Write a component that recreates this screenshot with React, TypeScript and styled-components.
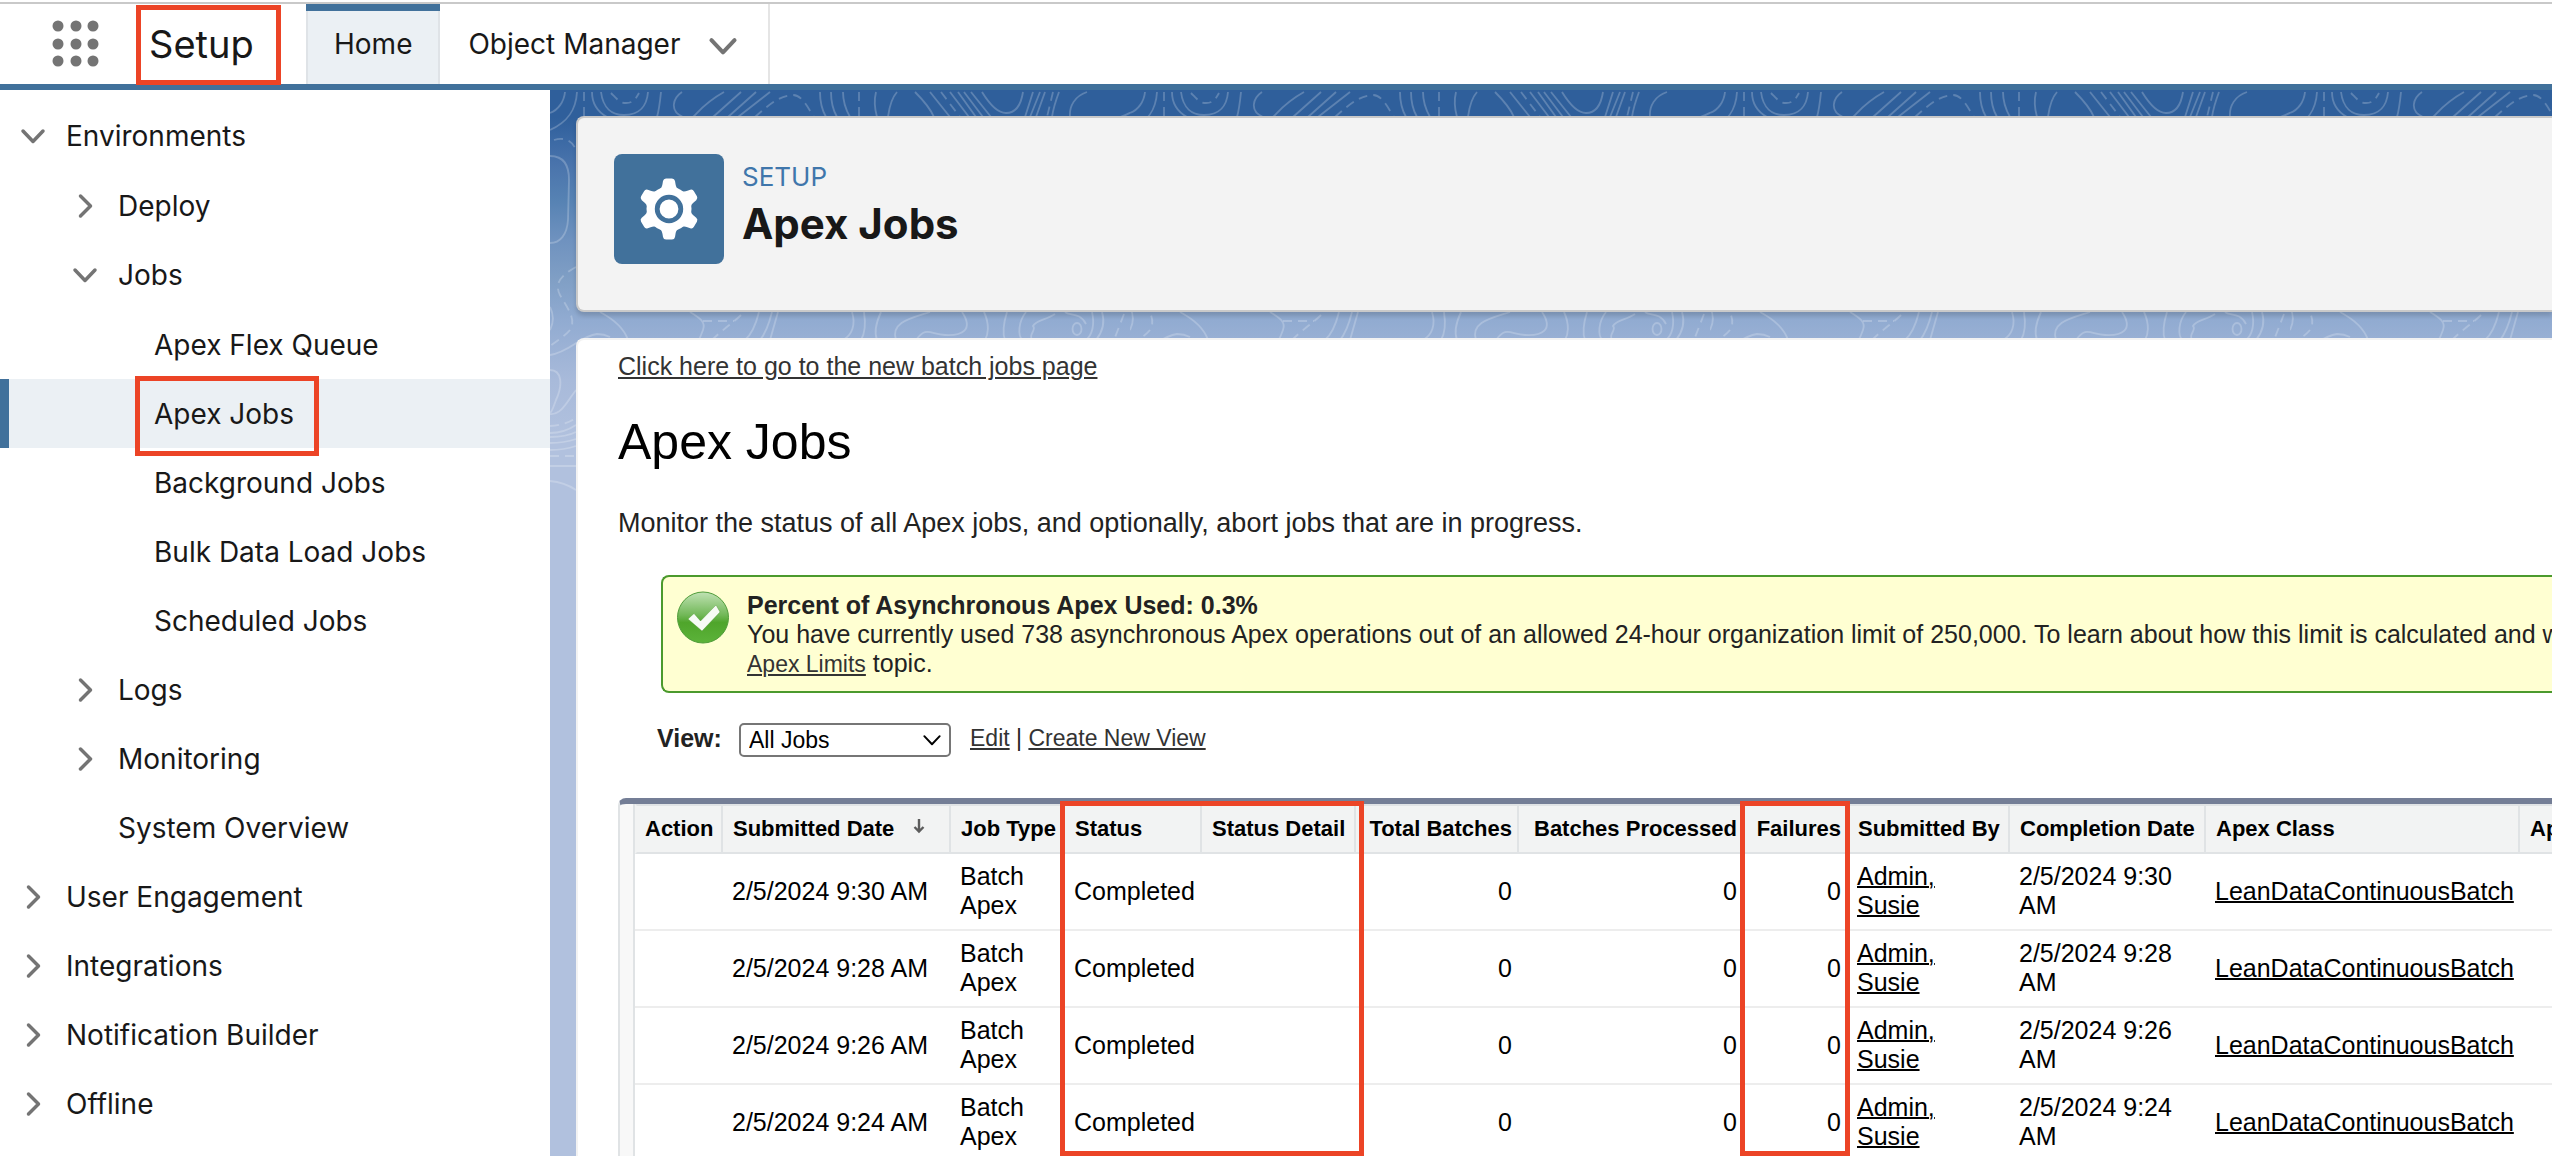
import React from "react";
import styled, { createGlobalStyle } from "styled-components";

const ui = `Inter, "Liberation Sans", sans-serif`;
const arial = `"Liberation Sans", Arial, sans-serif`;

const brand = "#41719b";
const tint = "#ebf0f4";
const callout = "#ec4426";

const GlobalStyle = createGlobalStyle`
  *, *::before, *::after { box-sizing: border-box; }
  body { margin: 0; background: #fff; color: #181818; font-family: ${ui}; }
  h1, h2, p, ul { margin: 0; padding: 0; }
  ul { list-style: none; }
  a { color: inherit; }
  button { margin: 0; padding: 0; border: 0; background: none; font: inherit; color: inherit; }
`;

const Shell = styled.div`
  display: flex;
  flex-direction: column;
  height: 100vh;
  overflow: hidden;
`;

const TopBar = styled.header`
  display: flex;
  flex: none;
  align-items: stretch;
  height: 88px;
  margin-top: 2px;
  border-top: 2px solid #c9c9c9;
  border-bottom: 6px solid ${brand};
`;

const Launcher = styled.button`
  display: flex;
  padding: 16px 0 0 52px;
  width: 136px;
`;

const AppName = styled.span`
  position: relative;
  width: 170px;
  padding-left: 13px;
  font-size: 38px;
  line-height: 80px;
`;

const Callout = styled.span<{ $top: number; $left: number; $width: number; $height: number }>`
  position: absolute;
  top: ${(p) => p.$top}px;
  left: ${(p) => p.$left}px;
  width: ${(p) => p.$width}px;
  height: ${(p) => p.$height}px;
  border: 5px solid ${callout};
  pointer-events: none;
`;

const Tabs = styled.nav`
  display: flex;
  border-right: 2px solid #e5e5e5;
`;

const Tab = styled.a<{ $active?: boolean }>`
  display: flex;
  align-items: center;
  padding: 0 28px;
  font-size: 28px;
  text-decoration: none;
  ${(p) =>
    p.$active &&
    `
    background: ${tint};
    box-shadow: inset 0 7px ${brand}, inset 2px 0 #dfe3e7, inset -2px 0 #dfe3e7;
  `}
`;

const TabMenu = styled.button`
  display: flex;
  align-items: center;
  padding: 4px 30px 0 0;
`;

const Body = styled.div`
  display: flex;
  flex: 1;
  min-height: 0;
`;

const Sidebar = styled.nav`
  flex: none;
  width: 550px;
  padding-top: 11px;
  background: #fff;
`;

const Tree = styled.ul`
  & & { padding-top: 1px; }
`;

const Row = styled.div<{ $depth: number; $active?: boolean }>`
  position: relative;
  display: flex;
  align-items: center;
  gap: 20px;
  height: 69px;
  padding-left: ${(p) => [20, 72, 154][p.$depth]}px;
  ${(p) => p.$active && `background: ${tint}; box-shadow: inset 9px 0 ${brand};`}
`;

const Toggle = styled.button`
  display: flex;
  justify-content: center;
  width: 26px;
`;

const RowLink = styled.a`
  font-size: 28px;
  line-height: 34px;
  text-decoration: none;
`;

const Main = styled.main`
  position: relative;
  flex: 1;
  min-width: 0;
  display: flex;
  flex-direction: column;
  gap: 26px;
  padding: 26px 0 0 26px;
  overflow: hidden;
  background: linear-gradient(
    #2f5f9b 28px,
    #3b69a4 50px,
    #4a74ac 75px,
    #5682b3 110px,
    #6f92bf 150px,
    #809fc5 190px,
    #91abd1 230px,
    #a8bada 290px,
    #b1c1de 350px
  );
`;

const Contours = styled.svg`
  position: absolute;
  top: 0;
  left: 0;
  width: 100%;
  height: 420px;
`;

const PageHeader = styled.section`
  position: relative;
  display: flex;
  flex: none;
  gap: 18px;
  height: 196px;
  padding: 36px;
  border: 2px solid #c9c9c9;
  border-right: 0;
  border-radius: 8px 0 0 8px;
  background: #f3f3f3;
  box-shadow: 0 4px 4px rgba(0, 0, 0, 0.14);
`;

const IconTile = styled.span`
  display: flex;
  align-items: center;
  justify-content: center;
  width: 110px;
  height: 110px;
  border-radius: 8px;
  background: ${brand};
`;

const Eyebrow = styled.p`
  padding-top: 6px;
  font-size: 26px;
  line-height: 34px;
  color: #3f76ab;
`;

const PageTitle = styled.h1`
  font-size: 42px;
  font-weight: 700;
  line-height: 60px;
`;

const Panel = styled.section`
  position: relative;
  flex: 1;
  padding: 11px 0 0 40px;
  border: 2px solid #f2f2f2;
  border-right: 0;
  border-bottom: 0;
  border-radius: 8px 0 0 0;
  background: #fff;
  color: #222;
  font-family: ${arial};
  font-size: 25px;
  line-height: 30px;
  white-space: nowrap;
`;

const TextLink = styled.a<{ $small?: boolean }>`
  color: #333;
  font-size: ${(p) => (p.$small ? 23 : 25)}px;
  text-decoration: underline;
`;

const Heading = styled.h2`
  padding-top: 31px;
  color: #000;
  font-size: 50px;
  font-weight: 400;
  line-height: 60px;
`;

const Intro = styled.p`
  padding: 36px 0 37px;
  font-size: 27px;
`;

const Notice = styled.div`
  display: flex;
  gap: 18px;
  margin-left: 43px;
  padding: 14px 0 12px 14px;
  border: 2px solid #4b9a2d;
  border-right: 0;
  border-radius: 8px 0 0 8px;
  background: #ffffd2;
  line-height: 29px;
  overflow: hidden;

  svg { flex: none; }
`;

const Filter = styled.form`
  display: flex;
  align-items: center;
  padding: 30px 0 41px 39px;
`;

const FilterLabel = styled.label`
  width: 82px;
  padding-bottom: 4px;
  font-weight: 700;
`;

const SelectBox = styled.span`
  position: relative;
  display: flex;
  width: 212px;
  margin-right: 19px;

  svg {
    position: absolute;
    top: 7px;
    right: 9px;
    pointer-events: none;
  }
`;

const Select = styled.select`
  appearance: none;
  width: 100%;
  height: 34px;
  padding: 0 8px;
  border: 2px solid #767676;
  border-radius: 5px;
  background: #fff;
  color: #000;
  font-family: ${arial};
  font-size: 23px;
`;

const FilterLinks = styled.span`
  padding-bottom: 4px;
  font-size: 23px;
`;

const TableFrame = styled.div`
  position: relative;
  padding-left: 13px;
  border-top: 6px solid #747e96;
  border-left: 2px solid #e0e3e5;
  border-radius: 8px 0 0 0;
  background: #f8f8f8;
`;

const Table = styled.table`
  width: 100%;
  table-layout: fixed;
  border-collapse: separate;
  border-spacing: 0;
  border-left: 2px solid #e0e3e5;
  background: #fff;
  color: #000;
`;

const Col = styled.col<{ $width?: number }>`
  width: ${(p) => (p.$width ? `${p.$width}px` : "auto")};
`;

const Th = styled.th<{ $end?: boolean }>`
  height: 50px;
  padding: 0 5px 0 10px;
  border: 2px solid #e0e3e5;
  border-width: 2px 0 2px 2px;
  background: #f2f3f3;
  font-size: 22px;
  line-height: 26px;
  text-align: ${(p) => (p.$end ? "right" : "left")};

  &:first-child { padding-left: 8px; border-left-color: #f2f3f3; }
  a { text-decoration: none; }
  svg { margin-left: 18px; }
`;

const Td = styled.td<{ $end?: boolean }>`
  height: 77px;
  padding: 8px 5px 9px 11px;
  border-bottom: 2px solid #ededed;
  font-size: 25px;
  line-height: 29px;
  text-align: ${(p) => (p.$end ? "right" : "left")};
  white-space: ${(p) => (p.$end ? "nowrap" : "normal")};

  a { text-decoration-thickness: 2px; }
`;

type Node = { label: string; open?: boolean; leaf?: boolean; active?: boolean; children?: Node[] };

const tree: Node[] = [
  {
    label: "Environments",
    open: true,
    children: [
      { label: "Deploy" },
      {
        label: "Jobs",
        open: true,
        children: [
          { label: "Apex Flex Queue", leaf: true },
          { label: "Apex Jobs", leaf: true, active: true },
          { label: "Background Jobs", leaf: true },
          { label: "Bulk Data Load Jobs", leaf: true },
          { label: "Scheduled Jobs", leaf: true },
        ],
      },
      { label: "Logs" },
      { label: "Monitoring" },
      { label: "System Overview", leaf: true },
    ],
  },
  { label: "User Engagement" },
  { label: "Integrations" },
  { label: "Notification Builder" },
  { label: "Offline" },
];

const columns: { label: string; width?: number; end?: boolean; sorted?: boolean }[] = [
  { label: "Action", width: 86 },
  { label: "Submitted Date", width: 228, sorted: true },
  { label: "Job Type", width: 114 },
  { label: "Status", width: 137 },
  { label: "Status Detail", width: 154 },
  { label: "Total Batches", width: 163, end: true },
  { label: "Batches Processed", width: 225, end: true },
  { label: "Failures", width: 104, end: true },
  { label: "Submitted By", width: 162 },
  { label: "Completion Date", width: 196 },
  { label: "Apex Class", width: 314 },
  { label: "Apex Method" },
];

const times = ["9:30", "9:28", "9:26", "9:24"];

function Chevron({ down, size = 26, color = "#747474", weight = 3.5 }: { down?: boolean; size?: number; color?: string; weight?: number }) {
  return (
    <svg width={size} height={size} viewBox="0 0 26 26" fill="none" stroke={color} strokeWidth={weight} strokeLinecap="round" strokeLinejoin="round" aria-hidden="true">
      <path d={down ? "M3 8 13 18.5 23 8" : "M8.5 3 18.5 13 8.5 23"} />
    </svg>
  );
}

function GearIcon() {
  return (
    <svg width="64" height="64" viewBox="-32 -32 64 64" aria-hidden="true">
      <circle r="22.5" fill="#fff" />
      {[0, 60, 120, 180, 240, 300].map((angle) => (
        <path
          key={angle}
          transform={`rotate(${angle})`}
          d="M-12 -18 C-8 -20 -7 -22 -6.5 -25 L-6 -28 Q-5.5 -30.5 -3 -30.5 H3 Q5.5 -30.5 6 -28 L6.5 -25 C7 -22 8 -20 12 -18Z"
          fill="#fff"
        />
      ))}
      <circle r="11.8" fill="#fff" stroke={brand} strokeWidth="4.8" />
    </svg>
  );
}

function CheckIcon() {
  return (
    <svg width="52" height="53" viewBox="0 0 52 53" aria-hidden="true">
      <defs>
        <linearGradient id="check-fill" x1="0" y1="0" x2="0" y2="1">
          <stop offset="0" stopColor="#c0e2b4" />
          <stop offset="0.45" stopColor="#72b858" />
          <stop offset="0.6" stopColor="#4fa52b" />
          <stop offset="1" stopColor="#5cb33a" />
        </linearGradient>
      </defs>
      <circle cx="26" cy="26.5" r="25.5" fill="url(#check-fill)" stroke="#4f9c3a" strokeWidth="1" />
      <path d="M11 28 17 22.5 23.5 30 39 14 43 21 25 40Z" fill="#f7fbf5" stroke="#3f8f22" strokeOpacity="0.35" strokeWidth="1" strokeLinejoin="round" />
    </svg>
  );
}

function SortArrow() {
  return (
    <svg width="14" height="18" viewBox="0 0 14 18" fill="none" stroke="#5c5c5c" strokeWidth="2.4" aria-label="Sorted descending">
      <path d="M7 1V14M2.5 9 7 13.5 11.5 9" />
    </svg>
  );
}

function TopoPattern() {
  return (
    <Contours aria-hidden="true">
      <defs>
        <pattern id="topo" width="580" height="420" patternUnits="userSpaceOnUse">
          <g fill="none" stroke="#fff" strokeOpacity="0.22" strokeWidth="1.8">
            <path d="M27 2C26 20 18 32 0 40M15 2C14 12 8 20 0 23M42 2C42 14 48 22 57 27M51 2C53 18 62 25 74 25C90 25 97 15 98 2M111 2C110 12 109 20 107 27M132 2C123 8 119 21 133 27L143 27C150 20 156 12 174 2M191 2 163 27M206 2 178 27M220 2 188 27" />
            <path d="M270 2C270 12 272 20 276 27M281 2C281 12 283 20 287 27M293 2C293 12 296 20 300 27M326 2C324 10 325 20 327 27M347 2C340 10 339 20 338 27M365 2C373 10 380 18 384 27M380 2 400 27M400 2 419 27M408 2 426 27M414 2 433 27M421 2 441 27" />
            <path d="M432 2C440 15 448 23 456 23C466 23 471 15 473 2M483 2 475 27M490 2 480 27M495 2 486 27M509 2C506 10 503 20 502 27M537 2C525 6 519 16 520 27M595 2C594 14 586 22 570 27" />
            <path d="M0 66C14 66 19 75 19 90L18 130C17 145 10 153 0 153M0 217C4 225 4 232 0 240M0 265C20 262 30 246 47 244C52 244 56 245 60 247M0 280C12 280 13 295 6 310C3 318 2 322 0 323M26 300C18 310 12 325 0 324" />
            <path d="M0 343C12 343 20 339 26 335M0 347C12 347 20 345 26 342M0 353C12 353 20 351 26 349M0 360C12 360 20 358 26 356M0 376H26M0 391C12 392 20 396 26 400" />
            <path d="M50 222C65 230 74 238 78 250M140 222C150 228 156 232 153 240L149 250M209 222C206 234 202 244 195 250M222 222C219 234 215 244 210 250M228 222 220 250M302 222C306 235 302 245 293 250M314 222C316 235 314 245 311 250M331 222C325 235 325 245 327 250M346 250C340 232 362 228 380 222" />
            <path d="M412 222C424 240 412 246 395 245C380 244 376 236 366 250M434 222C440 235 438 245 435 250M457 222C453 235 453 245 455 250M476 222C468 232 468 245 472 250M505 224C496 230 486 230 483 236C487 240 478 244 482 250M515 222C520 226 530 222 536 234M542 222C545 235 542 245 536 250M552 222C556 235 550 245 546 250" />
            <ellipse cx="527" cy="239" rx="4.5" ry="6" />
            <path strokeDasharray="9 6" d="M34 2V27M61 3C68 10 70 13 76 13C84 13 86 8 89 3M205 27C222 12 230 6 243 5C252 5 258 18 264 27M309 2V27M391 2 410 27M503 2 497 27M4 50C14 47 22 50 26 60M26 177C8 187 5 195 10 205C20 222 26 230 20 240C15 246 8 250 0 256" />
            <path strokeDasharray="9 6" d="M0 336C12 335 20 332 26 328M0 366H26M153 231H184M191 225C184 232 172 240 162 250M574 224 564 250" />
          </g>
        </pattern>
      </defs>
      <rect width="100%" height="420" fill="url(#topo)" />
    </Contours>
  );
}

function Branch({ nodes, depth = 0 }: { nodes: Node[]; depth?: number }) {
  return (
    <Tree>
      {nodes.map((node) => (
        <li key={node.label}>
          <Row $depth={depth} $active={node.active}>
            {depth < 2 && (
              <Toggle as={node.leaf ? "span" : "button"} aria-label={node.leaf ? undefined : `Toggle ${node.label}`}>
                {!node.leaf && <Chevron down={node.open} />}
              </Toggle>
            )}
            <RowLink href="#" aria-current={node.active ? "page" : undefined}>
              {node.label}
            </RowLink>
            {node.active && <Callout $top={-3} $left={135} $width={184} $height={80} />}
          </Row>
          {node.children && <Branch nodes={node.children} depth={depth + 1} />}
        </li>
      ))}
    </Tree>
  );
}

function JobsTable() {
  return (
    <TableFrame>
      <Table>
        <colgroup>
          {columns.map((c) => (
            <Col key={c.label} $width={c.width} />
          ))}
        </colgroup>
        <thead>
          <tr>
            {columns.map((c) => (
              <Th key={c.label} scope="col" $end={c.end}>
                {c.label === "Action" ? c.label : <a href="#">{c.label}</a>}
                {c.sorted && <SortArrow />}
              </Th>
            ))}
          </tr>
        </thead>
        <tbody>
          {times.map((time) => (
            <tr key={time}>
              <Td />
              <Td>2/5/2024 {time} AM</Td>
              <Td>Batch Apex</Td>
              <Td>Completed</Td>
              <Td />
              <Td $end>0</Td>
              <Td $end>0</Td>
              <Td $end>0</Td>
              <Td>
                <a href="#">Admin, Susie</a>
              </Td>
              <Td>2/5/2024 {time} AM</Td>
              <Td>
                <a href="#">LeanDataContinuousBatch</a>
              </Td>
              <Td />
            </tr>
          ))}
        </tbody>
      </Table>
      <Callout $top={-3} $left={440} $width={304} $height={355} />
      <Callout $top={-3} $left={1120} $width={110} $height={355} />
    </TableFrame>
  );
}

export default function App() {
  return (
    <Shell>
      <GlobalStyle />
      <TopBar>
        <Launcher aria-label="App Launcher">
          <svg width="48" height="48" viewBox="0 0 48 48" fill="#747474" aria-hidden="true">
            {[6, 24, 41].map((y) => [6, 24, 41].map((x) => <circle key={`${x}-${y}`} cx={x} cy={y} r="5.5" />))}
          </svg>
        </Launcher>
        <AppName>
          Setup
          <Callout $top={1} $left={0} $width={145} $height={80} />
        </AppName>
        <Tabs>
          <Tab href="#" $active>
            Home
          </Tab>
          <Tab href="#">Object Manager</Tab>
          <TabMenu aria-label="Object Manager menu">
            <Chevron down size={30} />
          </TabMenu>
        </Tabs>
      </TopBar>
      <Body>
        <Sidebar>
          <Branch nodes={tree} />
        </Sidebar>
        <Main>
          <TopoPattern />
          <PageHeader>
            <IconTile>
              <GearIcon />
            </IconTile>
            <div>
              <Eyebrow>SETUP</Eyebrow>
              <PageTitle>Apex Jobs</PageTitle>
            </div>
          </PageHeader>
          <Panel>
            <TextLink href="#">Click here to go to the new batch jobs page</TextLink>
            <Heading>Apex Jobs</Heading>
            <Intro>Monitor the status of all Apex jobs, and optionally, abort jobs that are in progress.</Intro>
            <Notice>
              <CheckIcon />
              <p>
                <strong>Percent of Asynchronous Apex Used: 0.3%</strong>
                <br />
                You have currently used 738 asynchronous Apex operations out of an allowed 24-hour organization limit of 250,000. To learn about how this limit is calculated and what
                <br />
                <TextLink href="#" $small>
                  Apex Limits
                </TextLink>{" "}
                topic.
              </p>
            </Notice>
            <Filter>
              <FilterLabel htmlFor="view">View:</FilterLabel>
              <SelectBox>
                <Select id="view" defaultValue="All Jobs">
                  <option>All Jobs</option>
                </Select>
                <Chevron down size={20} color="#000" weight={2.5} />
              </SelectBox>
              <FilterLinks>
                <TextLink href="#" $small>
                  Edit
                </TextLink>
                {" | "}
                <TextLink href="#" $small>
                  Create New View
                </TextLink>
              </FilterLinks>
            </Filter>
            <JobsTable />
          </Panel>
        </Main>
      </Body>
    </Shell>
  );
}
